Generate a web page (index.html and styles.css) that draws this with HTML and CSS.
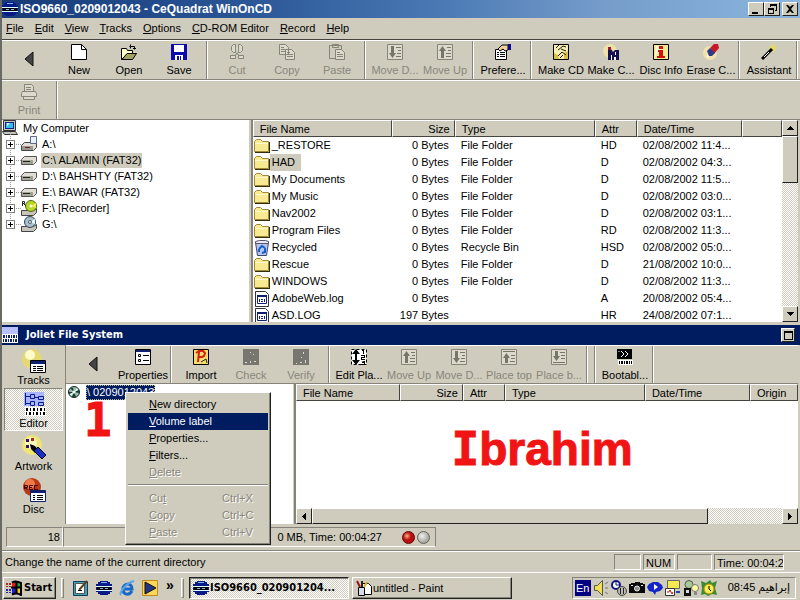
FILE: index.html
```html
<!DOCTYPE html>
<html lang="en">
<head>
<meta charset="utf-8">
<title>ISO9660_0209012043 - CeQuadrat WinOnCD</title>
<link rel="stylesheet" href="styles.css">
</head>
<body>
<svg class="defs" aria-hidden="true">
  <symbol id="globe" viewBox="0 0 16 16"><path fill="#061a88" d="M4 1h8v1h2v2h2v8h-2v2h-2v1H4v-1H2v-2H0V4h2V2h2z"/><path fill="#dff" d="M0 6h16v1H0zM0 10h16v1H0z"/><path fill="#000" d="M1 7h14v3H1z"/><path fill="#79b8e8" d="M4 8h3v1H4zM9 8h3v1H9zM5 2h6v1H5z"/></symbol>
  <symbol id="back" viewBox="0 0 16 16"><path fill="#444" stroke="#111" d="M12 1v14L4 8z"/></symbol>
  <symbol id="new" viewBox="0 0 16 16"><path fill="#fff" stroke="#000" d="M.5.5h10l5 5v10H.5z"/><path fill="none" stroke="#000" d="M10.500.5v5h5"/></symbol>
  <symbol id="open" viewBox="0 0 16 16"><path fill="#ffffd0" stroke="#000" d="M.5 15.500v-11h5l1 2h5v4h-6z"/><path fill="#a5a360" stroke="#000" d="M1 15.500l5-6h9.500l-4 6z"/><path fill="none" stroke="#000" d="M8.500 2.500h5v3M12 4.500h3M9.500.5v4"/></symbol>
  <symbol id="save" viewBox="0 0 16 16"><path fill="#0a0ab0" d="M0 0h16v16H0z"/><path fill="#fff" d="M3 1h10v7H3zM4 11h8v5H4z"/><path fill="#0a0ab0" d="M6 12h2v4H6zM9 12h1v4H9z"/></symbol>
  <symbol id="cut" viewBox="0 0 16 16"><path fill="#dddacd" stroke="#858579" d="M6.500.5v8M9.500.5v8M6.500.5h-2l-2 2v4l2 2h2l4 3M9.500.5h2l2 2v4l-2 2h-2l-4 3M1.500 11.500h5v3h-5zM9.500 11.500h5v3h-5z"/></symbol>
  <symbol id="copy" viewBox="0 0 16 16"><path fill="#dddacd" stroke="#858579" d="M.5.5h6l3 3v7h-9zM6.500 5.500h6l3 3v7h-9z"/><path stroke="#858579" d="M2 3.500h3M2 5.500h4M2 7.500h4M8 8.500h3M8 10.500h6M8 12.500h6"/></symbol>
  <symbol id="paste" viewBox="0 0 16 16"><path fill="#cfccbd" stroke="#858579" d="M.5 1.500h12v13H.5zM3.500.5h6v3h-6z"/><path fill="#dddacd" stroke="#858579" d="M6.500 5.500h6l3 3v7h-9z"/><path stroke="#858579" d="M8 8.500h3M8 10.500h6M8 12.500h6"/></symbol>
  <symbol id="down" viewBox="0 0 16 16"><path fill="#dddacd" stroke="#858579" d="M.5.5h15v15H.5z"/><path fill="#77766b" d="M4 2h3v7h2l-3.500 5L2 9h2zM9 3h5v1H9zM11 6h3v1h-3zM10 9h4v1h-4zM9 12h5v1H9z"/></symbol>
  <symbol id="up" viewBox="0 0 16 16"><path fill="#dddacd" stroke="#858579" d="M.5.5h15v15H.5z"/><path fill="#77766b" d="M4 14h3V7h2L5.500 2 2 7h2zM10 3h4v1h-4zM11 6h3v1h-3zM9 9h5v1H9zM9 12h5v1H9z"/></symbol>
  <symbol id="top" viewBox="0 0 16 16"><path fill="#dddacd" stroke="#858579" d="M.5.5h15v15H.5z"/><path fill="#77766b" d="M2 2h12v1H2zM4 14h3V9h2L5.500 4 2 9h2zM10 6h4v1h-4zM10 9h4v1h-4zM9 12h5v1H9z"/></symbol>
  <symbol id="bottom" viewBox="0 0 16 16"><path fill="#dddacd" stroke="#858579" d="M.5.5h15v15H.5z"/><path fill="#77766b" d="M2 13h12v1H2zM4 2h3v5h2l-3.500 5L2 7h2zM9 3h5v1H9zM10 6h4v1h-4zM10 9h4v1h-4z"/></symbol>
  <symbol id="prefs" viewBox="0 0 16 16"><path fill="#fff" stroke="#000" d="M.5 5.500h11v10H.5z"/><path stroke="#000" d="M2 8.500h2M5 8.500h5M2 10.500h2M5 10.500h5M2 12.500h2M5 12.500h5"/><path fill="#efd09a" stroke="#000" d="M3 5l4-4h6v5l-3 1-2-2-3 2z"/><path fill="#0a0a90" d="M13 0h3v6h-3z"/></symbol>
  <symbol id="makecd" viewBox="0 0 16 16"><path fill="#f5efb0" stroke="#000" d="M.5.5h15v15H.5z"/><path fill="#d8c04a" d="M1 9l4 2 1 4H1zM11 9l4-2v8h-4z"/><path fill="none" stroke="#20180a" d="M3 4l3-3M5 6l5-4 3 1M8 5l5 2M5 12l4-4 4 3M10 11l-3 3"/></symbol>
  <symbol id="makeimg" viewBox="0 0 16 16"><circle cx="7" cy="7" r="7" fill="#eee2a8"/><path fill="#15104f" d="M5 4l3 1 2 3 2-2h4v10H5z"/><path fill="#fff" d="M8 11h1v5H8zM12 8h1v3h-1zM11 13h2v3h-2z"/><path fill="#a01830" d="M5 3h3v3H5z"/></symbol>
  <symbol id="info" viewBox="0 0 16 16"><path fill="#f6ea92" stroke="#000" d="M.5.5h15v15H.5z"/><path fill="#fff8d8" d="M3 1l5 4-6 8z"/><path fill="#d01212" d="M6 2h4v3H6zM5 6h5v6h2v2H4v-2h2V8H5z"/></symbol>
  <symbol id="erase" viewBox="0 0 16 16"><circle cx="7" cy="9" r="7" fill="#f0e4ac"/><path fill="#c81828" d="M7 4l4-4h4l1 4-5 6z"/><path fill="#303a88" d="M4 7l3-3 5 5-3 3H6z"/><path fill="#fff" d="M4 10l2 3-2 1z"/></symbol>
  <symbol id="wand" viewBox="0 0 16 16"><path stroke="#e8e040" d="M12 0v8M8 4h8M9 1l6 6M15 1L9 7"/><path stroke="#000" stroke-width="3" d="M1 15L11 5"/><path stroke="#fff" d="M3 13l5-5"/></symbol>
  <symbol id="print" viewBox="0 0 16 16"><path fill="#dddacd" stroke="#858579" d="M3.500 7.500v-7h7l2 2v5zM1.500 7.500h13l1 2v3H.5v-3zM2.500 12.500h11v3h-11z"/><path stroke="#858579" d="M5 3.500h5M5 5.500h5"/></symbol>
  <symbol id="pc" viewBox="0 0 16 16"><path fill="#c9c7bb" stroke="#333" d="M1.500.5h12v10h-12zM.5 11.500h13l2 3h-13z"/><path fill="#10208a" d="M3 2h9v7H3z"/><path fill="#35bfe8" d="M4 3h7v5H4z"/><path fill="#fff" d="M5 3h3L5 6z"/></symbol>
  <symbol id="drive" viewBox="0 0 16 16"><path fill="#e0ded6" stroke="#555" d="M3.500 4.500h12v5l-3 3H.5v-5z"/><path fill="#a5a39a" d="M1 8h11v4H1z"/><path fill="#222" d="M2 9h7v1H2z"/><path fill="#3b3" d="M10 10h1v1h-1z"/></symbol>
  <symbol id="floppy" viewBox="0 0 16 16"><path fill="#e0ded6" stroke="#444" d="M3.500 6.500h12v5l-3 3H.5v-5z"/><path fill="#9a9890" d="M1 10h11v4H1z"/><path fill="#722" d="M4 11h5v1H4z"/><path fill="#e4f2ff" stroke="#668" d="M9.500.5h6v7h-6z"/></symbol>
  <symbol id="recorder" viewBox="0 0 16 16"><path fill="#c8c6bc" stroke="#444" d="M.5 10.500h12l3-2v4l-3 3H.5z"/><circle cx="10" cy="6" r="5.500" fill="#b4d828" stroke="#576814"/><path fill="#f4ef4c" d="M10 6l5-3v5z"/><circle cx="10" cy="6" r="1.500" fill="#fff"/><path fill="none" stroke="#222" d="M1.500 6V1.500h2v2H2M3 4l2 2"/></symbol>
  <symbol id="cdrom" viewBox="0 0 16 16"><path fill="#c8c6bc" stroke="#444" d="M.5 10.500h12l3-2v4l-3 3H.5z"/><circle cx="9" cy="6" r="5.500" fill="#a9bfcc" stroke="#345"/><path fill="#e8faff" d="M9 6l5-3v5z"/><circle cx="9" cy="6" r="1.500" fill="#fff" stroke="#456"/></symbol>
  <symbol id="folder" viewBox="0 0 16 16"><path fill="#f8ea92" stroke="#a08a3a" d="M.5 13.500v-10l2-2h4l2 2h6v10z"/><path fill="#fffacb" d="M1 5h13v1H1z"/><path fill="#30300c" d="M15 4h1v10h-1zM1 14h15v1H1z"/></symbol>
  <symbol id="bin" viewBox="0 0 16 16"><path fill="#b9c4ea" stroke="#3c447c" d="M1.500 2.500h13l-2 13h-9z"/><path fill="#e8e8fa" stroke="#556" d="M1.500 1.500l4-1h6l3 1v2h-13z"/><path fill="none" stroke="#1260c8" stroke-width="2" d="M5 9l3-3 3 2M11 8v4l-3 1M5 9v3"/></symbol>
  <symbol id="log" viewBox="0 0 16 16"><path fill="#fff" stroke="#333" d="M1.500.5h10l3 3v12h-13z"/><path fill="#fff" stroke="#102070" d="M3.500 4.500h9v8h-9z"/><path fill="#102070" d="M3 4h10v2H3zM5 8h1v3H5zM7 8h2v1H7zM7 10h2v1H7zM10 8h1v3h-1z"/></symbol>
  <symbol id="joliet" viewBox="0 0 16 16"><path fill="#b8c0ff" d="M0 0h16v7H0z"/><path fill="#fff" d="M0 7h16v9H0z"/><path fill="#102070" d="M1 8h2v3H1zM4 8h1v3H4zM6 8h2v3H6zM9 8h1v3H9zM11 8h2v3h-2zM14 8h1v3h-1zM1 12h1v3H1zM3 12h2v3H3zM6 12h1v3H6zM8 12h2v3H8zM11 12h1v3h-1zM13 12h2v3h-2z"/></symbol>
  <symbol id="props" viewBox="0 0 16 16"><path fill="#fff" stroke="#000" d="M.5.5h15v15H.5z"/><path fill="#102070" d="M1 1h14v2H1z"/><path fill="none" stroke="#000" d="M3.500 5.500h2v2h-2zM3.500 10.500h2v2h-2zM8 6.500h6M8 11.500h6"/></symbol>
  <symbol id="import" viewBox="0 0 16 16"><path fill="#f4dc70" stroke="#000" d="M.5.5h15v15H.5z"/><path fill="none" stroke="#d82010" stroke-width="2" d="M5 13l1-10M3 4l3-2h4l2 2-1 3-2 1H6"/><path fill="none" stroke="#222" d="M8 13l5-3 1 4"/></symbol>
  <symbol id="check" viewBox="0 0 16 16"><path fill="#77766f" d="M0 0h16v16H0z"/><path fill="#dddacd" d="M7 3h1v1H7zM10 5h1v1h-1zM2 13h2v1H2zM7 12h1v2H7zM11 12h2v1h-2z"/></symbol>
  <symbol id="verify" viewBox="0 0 16 16"><path fill="#77766f" d="M0 0h16v16H0z"/><path fill="#dddacd" d="M10 3h1v2h-1zM8 8h1v1H8zM12 11h1v3h-1zM7 13h2v1H7zM3 14h1v1H3z"/></symbol>
  <symbol id="edit" viewBox="0 0 16 16"><path fill="#fff" stroke="#000" stroke-dasharray="3 2" d="M.5.5h15v15H.5z"/><path fill="#000" d="M5 0l4 5H6v6h3l-4 5-4-5h3V5H1zM11 1h2v4h-1V2h-1zM10 6h4v3h-3v1h3v1h-4V8h3V7h-3zM10 12h4v4h-4v-1h3v-1h-2v-1h2z"/></symbol>
  <symbol id="boot" viewBox="0 0 16 16"><path fill="#000" d="M0 0h15v10H0z"/><path fill="none" stroke="#fff" d="M4 2l3 3-3 3M8 2l3 3-3 3M2 2v1"/><path fill="#fff" d="M1 11h15v5H1z"/><path fill="#000" d="M2 12h1v3H2zM4 12h2v3H4zM7 12h1v3H7zM9 12h2v3H9zM12 12h1v3h-1zM14 12h1v3h-1z"/></symbol>
  <symbol id="tracks" viewBox="0 0 24 24"><circle cx="10" cy="10" r="10" fill="#e6d874"/><circle cx="8" cy="6" r="5" fill="#fffcca"/><path fill="#fff" stroke="#000" d="M8.500 11.500h15v12h-15z"/><path fill="#102070" d="M9 12h14v3H9z"/><path stroke="#000" d="M11 17.500h3M15 17.500h6M11 19.500h3M15 19.500h6M11 21.500h3M15 21.500h6"/></symbol>
  <symbol id="editor" viewBox="0 0 24 24"><path fill="#aab4ff" d="M2 0h20v14H2z"/><path fill="none" stroke="#071a90" d="M3.500 1v12M4 4.500h4M4 11.500h4M8.500 2.500h4v4h-4zM8.500 9.500h4v4h-4zM13 5.500h4M16.500 4.500h5v3h-5zM16.500 10.500h5v3h-5z"/><path fill="#fff" d="M3 15h21v9H3z"/><path fill="#000" d="M4 16h2v3H4zM8 16h1v3H8zM11 16h2v3h-2zM15 16h1v3h-1zM18 16h2v3h-2zM22 16h1v3h-1zM4 20h1v3H4zM7 20h2v3H7zM11 20h1v3h-1zM14 20h2v3h-2zM18 20h1v3h-1zM21 20h2v3h-2z"/></symbol>
  <symbol id="artwork" viewBox="0 0 24 24"><circle cx="10" cy="10" r="10" fill="#f0e474"/><circle cx="9" cy="8" r="6" fill="#fff9bc"/><path fill="#301070" d="M4 4h3v3H4zM4 10h3v3H4z"/><path fill="#c02020" d="M9 3h3v3H9z"/><path fill="#000" d="M8 9l5 2 3 4-3 3-4-4z"/><path fill="#1830c8" stroke="#000" d="M12 16l4-4 8 8-4 4z"/></symbol>
  <symbol id="disc" viewBox="0 0 24 24"><circle cx="10" cy="9" r="9" fill="#b83a18"/><circle cx="8" cy="6" r="5" fill="#ef7a48"/><path fill="none" stroke="#400" d="M2.500 11V7.500h3v2h-3l3 2M11 7.500H7.500v4H11M7.500 9.500H10M16 7.500h-3.500v4H16"/><path fill="#fff" stroke="#102070" d="M8.500 12.500h15v11h-15z"/><path fill="#102070" d="M9 13h14v2H9z"/><path stroke="#000" d="M11 17.500h2M15 17.500h6M11 19.500h2M15 19.500h6M11 21.500h2M15 21.500h6"/></symbol>
  <symbol id="cd" viewBox="0 0 12 12"><circle cx="6" cy="6" r="5.500" fill="#9ba" stroke="#122"/><path fill="#163a34" d="M6 6L2 2h3zM6 6l5-2v3zM6 6l2 5H4zM6 6L1 8V6z"/><path fill="#e8fff4" d="M6 6l3-4 1 2zM6 6l-3 4-1-2z"/><circle cx="6" cy="6" r="1.500" fill="#fff"/></symbol>
  <symbol id="windows" viewBox="0 0 17 16"><path fill="#d22" d="M6 3l4-1v5H6z"/><path fill="#2a2" d="M11 2l4 1v5l-4-1z"/><path fill="#22b" d="M6 8h4v5l-4 1z"/><path fill="#ec2" d="M11 8l4 1v5l-4-1z"/><path fill="none" stroke="#000" stroke-width="2" d="M6 2.500c3-2 6-1 9 .5v12c-3-2-6-2-9-.5M10.500 1v13M5 7.500h10"/><path fill="#b22" d="M0 3h2v2H0zM3 3h2v2H3zM0 6h2v1H0zM3 6h2v1H3z"/><path fill="#22b" d="M0 9h2v2H0zM3 9h2v2H3zM0 12h2v1H0zM3 12h2v1H3z"/></symbol>
  <symbol id="desktop" viewBox="0 0 16 16"><path fill="#45a0b4" stroke="#163a58" d="M.5 1.500h14v14H.5z"/><path fill="#fff" stroke="#555" d="M2.500 3.500h9v10h-9z"/><path fill="none" stroke="#604018" stroke-width="2" d="M6 10l8-9"/><path stroke="#000" d="M5 10.500h4"/></symbol>
  <symbol id="ie" viewBox="0 0 16 16"><path fill="none" stroke="#1768c8" stroke-width="3" d="M13 11c-3 5-9 4-9-2s9-7 9 0H5"/><path fill="none" stroke="#58a4e8" stroke-width="2" d="M2 15C0 13 7 3 15 1"/></symbol>
  <symbol id="media" viewBox="0 0 16 16"><path fill="#f8d858" stroke="#c88818" d="M.5.5h15v15H.5z"/><path fill="#263484" stroke="#111" d="M3 2l11 6-11 6z"/></symbol>
  <symbol id="paint" viewBox="0 0 16 16"><path fill="#fff" stroke="#000" d="M6.500 3.500h6l3 3v8h-9z"/><path fill="#d8dbe8" stroke="#000" d="M2.500 7.500h6v8h-6z"/><path stroke="#a01010" stroke-width="2" d="M4 7L1 1"/><path stroke="#222" stroke-width="2" d="M6 7V1"/><path stroke="#d8b020" stroke-width="2" d="M8 7l3-5"/></symbol>
  <symbol id="sound" viewBox="0 0 16 16"><path fill="#f2e050" stroke="#555" d="M1.500 5.500h3l5-5v15l-5-5h-3z"/><path stroke="#777" d="M12 4l3-2M12 8h3M12 12l3 2"/></symbol>
  <symbol id="sched" viewBox="0 0 16 16"><circle cx="5" cy="5" r="4" fill="#fff" stroke="#101880" stroke-width="2"/><path fill="none" stroke="#101880" d="M5 2v3h3"/><circle cx="11" cy="11" r="4.500" fill="#bbb9b0" stroke="#444"/><path stroke="#222" d="M9.500 8v6M12.500 8v6"/></symbol>
  <symbol id="camera" viewBox="0 0 16 16"><path fill="#0a0a0a" d="M2 3h4V2h5v1h3v1h2v9H0V4h2z"/><circle cx="8" cy="8.500" r="2.500" fill="#888" stroke="#eee"/><path fill="#ddd" d="M2 5h2v1H2zM12 5h2v1h-2z"/></symbol>
  <symbol id="eye" viewBox="0 0 16 16"><path fill="#1424c8" d="M0 7l2-3 4-2h5l4 3 1 3-3 3-4 1-1 3-2-3-4-1z"/><path fill="#fff" d="M7 4l4 3-4 3z"/></symbol>
  <symbol id="netmon" viewBox="0 0 16 16"><path fill="#f6e850" stroke="#666" d="M2.500.5h12v8h-12z"/><path fill="#fff" stroke="#333" d="M.5 8.500h9v7h-9z"/><path fill="none" stroke="#c01818" d="M2 12h2l1-2 2 4 1-2"/><path fill="#24a" d="M11 11h4v2h-4z"/></symbol>
  <symbol id="power" viewBox="0 0 16 16"><circle cx="6" cy="4.500" r="4" fill="#a8c898" stroke="#476044"/><path fill="#111" d="M1 8h7v8H1z"/><path fill="#ddd" d="M3 10h3v3H3z"/><circle cx="12" cy="8" r="3.500" fill="#ffffa0" stroke="#777"/><path fill="#888" d="M11 12h3v3h-3z"/></symbol>
  <symbol id="alarm" viewBox="0 0 16 16"><path fill="#3a8c34" d="M0 1l5 2 4-3 2 3 5-2-2 7 2 7-5-1-4 2-3-2-4 1 1-7z"/><circle cx="8" cy="9" r="5" fill="#f4ef58" stroke="#b80"/><path fill="none" stroke="#000" d="M8 6v3l2 2"/></symbol>
  <symbol id="a-up" viewBox="0 0 7 4"><path d="M3 0h1v1h1v1h1v1h1v1H0V3h1V2h1V1h1z"/></symbol>
  <symbol id="a-down" viewBox="0 0 7 4"><path d="M0 0h7v1H6v1H5v1H4v1H3V3H2V2H1V1H0z"/></symbol>
  <symbol id="a-left" viewBox="0 0 4 7"><path d="M0 3h1V2h1V1h1V0h1v7H3V6H2V5H1V4H0z"/></symbol>
  <symbol id="a-right" viewBox="0 0 4 7"><path d="M4 3H3V2H2V1H1V0H0v7h1V6h1V5h1V4h1z"/></symbol>
</svg>

<div class="screen">
  <header class="titlebar">
    <svg class="i16"><use href="#globe"/></svg>
    <h1 class="title">ISO9660_0209012043 - CeQuadrat WinOnCD</h1>
    <div class="winbtns">
      <button class="winbtn" aria-label="Minimize"><svg viewBox="0 0 12 10"><path d="M2 8h6v2H2z"/></svg></button>
      <button class="winbtn" aria-label="Restore"><svg viewBox="0 0 12 10"><path d="M4 0h7v7H9V6h1V2H5v1H4zM2 4h6v6H2zM3 6v3h4V6z" fill-rule="evenodd"/></svg></button>
      <button class="winbtn close" aria-label="Close"><svg viewBox="0 0 12 10"><path d="M2 1h2l2 2 2-2h2L7 5l3 4H8L6 7 4 9H2l3-4z"/></svg></button>
    </div>
  </header>

  <nav class="menubar">
    <button><u>F</u>ile</button><button><u>E</u>dit</button><button><u>V</u>iew</button><button><u>T</u>racks</button><button><u>O</u>ptions</button><button><u>C</u>D-ROM Editor</button><button><u>R</u>ecord</button><button><u>H</u>elp</button>
  </nav>

  <div class="toolbar main">
    <button class="tool solo" aria-label="Back"><svg class="i16"><use href="#back"/></svg></button>
    <button class="tool"><svg class="i16"><use href="#new"/></svg>New</button>
    <button class="tool"><svg class="i16"><use href="#open"/></svg>Open</button>
    <button class="tool"><svg class="i16"><use href="#save"/></svg>Save</button>
    <i class="sep"></i>
    <button class="tool" disabled><svg class="i16"><use href="#cut"/></svg>Cut</button>
    <button class="tool" disabled><svg class="i16"><use href="#copy"/></svg>Copy</button>
    <button class="tool" disabled><svg class="i16"><use href="#paste"/></svg>Paste</button>
    <i class="sep"></i>
    <button class="tool" disabled><svg class="i16"><use href="#down"/></svg>Move D...</button>
    <button class="tool" disabled><svg class="i16"><use href="#up"/></svg>Move Up</button>
    <i class="sep"></i>
    <button class="tool"><svg class="i16"><use href="#prefs"/></svg>Prefere...</button>
    <i class="sep"></i>
    <button class="tool"><svg class="i16"><use href="#makecd"/></svg>Make CD</button>
    <button class="tool"><svg class="i16"><use href="#makeimg"/></svg>Make C...</button>
    <button class="tool"><svg class="i16"><use href="#info"/></svg>Disc Info</button>
    <button class="tool"><svg class="i16"><use href="#erase"/></svg>Erase C...</button>
    <i class="sep"></i>
    <button class="tool"><svg class="i16"><use href="#wand"/></svg>Assistant</button>
    <i class="sep"></i>
  </div>
  <div class="toolbar main">
    <button class="tool" disabled><svg class="i16"><use href="#print"/></svg>Print</button>
    <i class="sep"></i>
  </div>

  <main class="explorer">
    <ul class="tree">
      <li class="root"><svg class="i16"><use href="#pc"/></svg><span>My Computer</span></li>
      <li><i class="plus"></i><svg class="i16"><use href="#floppy"/></svg><span>A:\</span></li>
      <li><i class="plus"></i><svg class="i16"><use href="#drive"/></svg><span class="grayed">C:\ ALAMIN (FAT32)</span></li>
      <li><i class="plus"></i><svg class="i16"><use href="#drive"/></svg><span>D:\ BAHSHTY (FAT32)</span></li>
      <li><i class="plus"></i><svg class="i16"><use href="#drive"/></svg><span>E:\ BAWAR (FAT32)</span></li>
      <li><i class="plus"></i><svg class="i16"><use href="#recorder"/></svg><span>F:\ [Recorder]</span></li>
      <li><i class="plus"></i><svg class="i16"><use href="#cdrom"/></svg><span>G:\</span></li>
    </ul>
    <div class="listpane">
      <div class="tablewrap">
        <table>
          <colgroup><col class="w139"><col class="w63"><col class="w140"><col class="w42"><col class="w105"><col></colgroup>
          <thead><tr><th>File Name</th><th class="num">Size</th><th>Type</th><th>Attr</th><th>Date/Time</th><th></th></tr></thead>
          <tbody>
            <tr><td class="name"><svg class="i16"><use href="#folder"/></svg><span>_RESTORE</span></td><td class="num">0 Bytes</td><td>File Folder</td><td>HD</td><td>02/08/2002 11:4...</td><td></td></tr>
            <tr><td class="name"><svg class="i16"><use href="#folder"/></svg><span class="grayed">HAD</span></td><td class="num">0 Bytes</td><td>File Folder</td><td>D</td><td>02/08/2002 04:3...</td><td></td></tr>
            <tr><td class="name"><svg class="i16"><use href="#folder"/></svg><span>My Documents</span></td><td class="num">0 Bytes</td><td>File Folder</td><td>D</td><td>02/08/2002 11:5...</td><td></td></tr>
            <tr><td class="name"><svg class="i16"><use href="#folder"/></svg><span>My Music</span></td><td class="num">0 Bytes</td><td>File Folder</td><td>D</td><td>02/08/2002 03:0...</td><td></td></tr>
            <tr><td class="name"><svg class="i16"><use href="#folder"/></svg><span>Nav2002</span></td><td class="num">0 Bytes</td><td>File Folder</td><td>D</td><td>02/08/2002 03:1...</td><td></td></tr>
            <tr><td class="name"><svg class="i16"><use href="#folder"/></svg><span>Program Files</span></td><td class="num">0 Bytes</td><td>File Folder</td><td>RD</td><td>02/08/2002 11:3...</td><td></td></tr>
            <tr><td class="name"><svg class="i16"><use href="#bin"/></svg><span>Recycled</span></td><td class="num">0 Bytes</td><td>Recycle Bin</td><td>HSD</td><td>02/08/2002 05:0...</td><td></td></tr>
            <tr><td class="name"><svg class="i16"><use href="#folder"/></svg><span>Rescue</span></td><td class="num">0 Bytes</td><td>File Folder</td><td>D</td><td>21/08/2002 10:0...</td><td></td></tr>
            <tr><td class="name"><svg class="i16"><use href="#folder"/></svg><span>WINDOWS</span></td><td class="num">0 Bytes</td><td>File Folder</td><td>D</td><td>02/08/2002 11:3...</td><td></td></tr>
            <tr><td class="name"><svg class="i16"><use href="#log"/></svg><span>AdobeWeb.log</span></td><td class="num">0 Bytes</td><td></td><td>A</td><td>20/08/2002 05:4...</td><td></td></tr>
            <tr><td class="name"><svg class="i16"><use href="#log"/></svg><span>ASD.LOG</span></td><td class="num">197 Bytes</td><td></td><td>HR</td><td>24/08/2002 07:1...</td><td></td></tr>
          </tbody>
        </table>
      </div>
      <div class="vscroll">
        <button aria-label="Scroll up"><svg class="ah"><use href="#a-up"/></svg></button>
        <div class="thumb"></div><div class="track"></div>
        <button aria-label="Scroll down"><svg class="ah"><use href="#a-down"/></svg></button>
      </div>
    </div>
  </main>

  <div class="subtitle">
    <svg class="i16"><use href="#joliet"/></svg>
    <h2 class="title">Joliet File System</h2>
    <button class="winbtn max" aria-label="Maximize"><svg viewBox="0 0 9 9"><path fill-rule="evenodd" d="M0 0h9v9H0zM1 2v6h7V2z"/></svg></button>
  </div>

  <section class="project">
    <nav class="side">
      <button><svg class="i24"><use href="#tracks"/></svg>Tracks</button>
      <button class="on"><svg class="i24"><use href="#editor"/></svg>Editor</button>
      <button><svg class="i24"><use href="#artwork"/></svg>Artwork</button>
      <button><svg class="i24"><use href="#disc"/></svg>Disc</button>
    </nav>
    <div class="work">
      <div class="toolbar">
        <button class="tool solo" aria-label="Back"><svg class="i16"><use href="#back"/></svg></button>
        <button class="tool"><svg class="i16"><use href="#props"/></svg>Properties</button>
        <i class="sep"></i>
        <button class="tool"><svg class="i16"><use href="#import"/></svg>Import</button>
        <button class="tool" disabled><svg class="i16"><use href="#check"/></svg>Check</button>
        <button class="tool" disabled><svg class="i16"><use href="#verify"/></svg>Verify</button>
        <i class="sep"></i>
        <button class="tool"><svg class="i16"><use href="#edit"/></svg>Edit Pla...</button>
        <button class="tool" disabled><svg class="i16"><use href="#up"/></svg>Move Up</button>
        <button class="tool" disabled><svg class="i16"><use href="#down"/></svg>Move D...</button>
        <button class="tool" disabled><svg class="i16"><use href="#top"/></svg>Place top</button>
        <button class="tool" disabled><svg class="i16"><use href="#bottom"/></svg>Place b...</button>
        <i class="sep"></i><i class="sep"></i>
        <button class="tool"><svg class="i16"><use href="#boot"/></svg>Bootabl...</button>
        <i class="sep"></i>
      </div>
      <div class="panes">
        <div class="ptree">
          <div class="volume"><svg class="i12"><use href="#cd"/></svg><span class="picked">\ 0209012043</span></div>
          <div class="note one">1</div>
          <div class="popup" role="menu">
            <button><span><u>N</u>ew directory</span></button>
            <button class="hot"><span><u>V</u>olume label</span></button>
            <button><span><u>P</u>roperties...</span></button>
            <button><span><u>F</u>ilters...</span></button>
            <button disabled><span><u>D</u>elete</span></button>
            <hr>
            <button disabled><span>Cu<u>t</u></span><span class="key">Ctrl+X</span></button>
            <button disabled><span><u>C</u>opy</span><span class="key">Ctrl+C</span></button>
            <button disabled><span><u>P</u>aste</span><span class="key">Ctrl+V</span></button>
          </div>
        </div>
        <div class="plist">
          <table>
            <colgroup><col class="w104"><col class="w63"><col class="w42"><col class="w140"><col class="w105"><col></colgroup>
            <thead><tr><th>File Name</th><th class="num">Size</th><th>Attr</th><th>Type</th><th>Date/Time</th><th>Origin</th></tr></thead>
          </table>
          <div class="note author"><span class="cap">I</span>brahim</div>
          <div class="hscroll">
            <button aria-label="Scroll left"><svg class="av"><use href="#a-left"/></svg></button>
            <div class="thumb"></div><div class="track"></div>
            <button aria-label="Scroll right"><svg class="av"><use href="#a-right"/></svg></button>
          </div>
        </div>
      </div>
    </div>
  </section>

  <div class="summary">
    <div class="count">18</div>
    <div class="total"><span>0 MB, Time: 00:04:27</span><i class="lamp red"></i><i class="lamp"></i></div>
  </div>

  <footer class="status">
    <div class="msg">Change the name of the current directory</div>
    <div class="cell c1"></div><div class="cell c2">NUM</div><div class="cell c3"></div><div class="cell c4">Time: 00:04:2</div>
  </footer>

  <div class="taskbar">
    <button class="start"><svg class="i17"><use href="#windows"/></svg>Start</button>
    <i class="grip"></i>
    <div class="quick">
      <button aria-label="Show Desktop"><svg class="i16"><use href="#desktop"/></svg></button>
      <button aria-label="WinOnCD"><svg class="i16"><use href="#globe"/></svg></button>
      <button aria-label="Internet Explorer"><svg class="i16"><use href="#ie"/></svg></button>
      <button aria-label="Media Player"><svg class="i16"><use href="#media"/></svg></button>
    </div>
    <span class="more">»</span>
    <i class="grip"></i>
    <button class="task on"><svg class="i16"><use href="#globe"/></svg>ISO9660_020901204...</button>
    <button class="task"><svg class="i16"><use href="#paint"/></svg>untitled - Paint</button>
    <div class="tray">
      <span class="lang">En</span>
      <svg class="i16"><use href="#sound"/></svg><svg class="i16"><use href="#sched"/></svg><svg class="i16"><use href="#camera"/></svg><svg class="i16"><use href="#eye"/></svg><svg class="i16"><use href="#netmon"/></svg><svg class="i16"><use href="#power"/></svg><svg class="i16"><use href="#alarm"/></svg>
      <span class="clock">08:45 <bdi lang="ar">إبراهيم</bdi></span>
    </div>
  </div>
</div>
</body>
</html>
```

FILE: styles.css
```css
:root {
  --face: #cfccbd;
  --shade: #85837a;
  --dark: #45443f;
  --navy: #001c60;
  --dither: repeating-conic-gradient(#fff 0 25%, #cfccbd 0 50%) 0 0 / 2px 2px;
  --ui: "Liberation Sans", Arial, sans-serif;
  --bold: "DejaVu Sans Condensed", "DejaVu Sans", sans-serif;
}
* { box-sizing: border-box; }
body { margin: 0; font: 11px/16px var(--ui); color: #000; }
button { margin: 0; padding: 0; border: 0; background: none; font: inherit; color: inherit; }
ul { list-style: none; margin: 0; padding: 0; }
svg { display: block; flex: none; }
u { text-underline-offset: 1px; }
.defs { display: none; }
.i12 { width: 12px; height: 12px; }
.i16 { width: 16px; height: 16px; }
.i17 { width: 17px; height: 16px; }
.i24 { width: 24px; height: 24px; }
.ah { width: 7px; height: 4px; }
.av { width: 4px; height: 7px; }

.screen { display: flex; flex-direction: column; height: 100vh; overflow: hidden; background: var(--face); border-left: 2px solid #6a6a64; }

/* title bars */
.titlebar { display: flex; align-items: center; height: 18px; flex: none; padding-right: 2px; background: linear-gradient(90deg, #173b78, #2a5596 30%, #4a79b4 55%, #759cca 75%, #8ab6de); }
.title { margin: 0 auto 0 2px; font: bold 12px/18px var(--ui); color: #fff; white-space: nowrap; }
.winbtns { display: flex; }
.winbtn { display: flex; align-items: center; justify-content: center; width: 16px; height: 14px; background: var(--face); border: 1px solid; border-color: #fff #222 #222 #fff; }
.winbtn svg { width: 12px; height: 10px; }
.close { margin-left: 2px; }
.subtitle { display: flex; align-items: center; height: 20px; flex: none; margin-top: 3px; padding-right: 5px; background: var(--navy); }
.subtitle .title { margin-left: 8px; font: bold 11px/18px var(--bold); }
.winbtn.max { width: 14px; }
.max svg { width: 9px; height: 9px; }

.menubar { display: flex; align-items: flex-start; gap: 11px; height: 22px; flex: none; padding: 2px 4px 0; }

/* toolbars */
.toolbar { display: flex; height: 39px; flex: none; padding-left: 2px; border-top: 1px solid #fff; border-bottom: 1px solid var(--shade); }
.toolbar.main { height: 40px; }
.menubar + .toolbar { box-shadow: 0 -1px var(--dark); }
.tool { display: flex; flex-direction: column; align-items: center; width: 50px; flex: none; padding-top: 3px; white-space: nowrap; }
.tool .i16 { margin-bottom: 2px; }
.tool:disabled { color: #88867b; }
.tool.solo { justify-content: center; padding: 0; }
.sep { width: 8px; flex: none; background: linear-gradient(90deg, transparent 2px, var(--shade) 2px 3px, #fff 3px 4px, transparent 4px); }

/* drives and files */
.explorer { display: flex; flex: 203 1 0; min-height: 0; margin-right: 2px; }
.tree { width: 31%; flex: none; background: #fff; overflow: hidden; }
.tree li { display: flex; align-items: center; height: 16px; padding-left: 4px; }
.tree .root { padding: 0; }
.tree span { padding: 0 1px; margin-left: 4px; line-height: 15px; white-space: nowrap; }
.plus { position: relative; width: 9px; height: 9px; margin-right: 6px; flex: none; border: 1px solid #808080; background: linear-gradient(#000, #000) 1px 3px / 5px 1px no-repeat, linear-gradient(#000, #000) 3px 1px / 1px 5px no-repeat; }
.plus::before { content: ""; position: absolute; left: 3px; top: -9px; height: 7px; border-left: 1px dotted #999; }
.plus::after { content: ""; position: absolute; left: 9px; top: 3px; width: 5px; border-top: 1px dotted #999; }
.grayed { background: var(--face); }
.listpane { display: flex; flex: 1; min-width: 0; margin-left: 2px; border-left: 2px solid var(--shade); background: #fff; overflow: hidden; }
.tablewrap { flex: 1; min-width: 0; overflow: hidden; }
table { width: 100%; table-layout: fixed; border-collapse: separate; border-spacing: 0; }
.w42 { width: 42px; }
.w63 { width: 63px; }
.w104 { width: 104px; }
.w105 { width: 105px; }
.w139 { width: 139px; }
.w140 { width: 140px; }
th { height: 17px; padding: 0 6px; font-weight: normal; text-align: left; line-height: 14px; white-space: nowrap; background: var(--face); border: 1px solid; border-color: #fff var(--dark) var(--dark) #fff; }
th.num, td.num { text-align: right; }
th.num { padding-right: 4px; }
td { height: 17px; padding: 0 6px; line-height: 17px; white-space: nowrap; }
.name { display: flex; align-items: center; padding: 0 1px; }
.name span { padding: 0 6px 0 2px; }

/* scroll bars */
.vscroll { display: flex; flex-direction: column; width: 16px; flex: none; }
.hscroll { display: flex; height: 16px; flex: none; margin-top: auto; }
.vscroll button, .hscroll button { display: flex; align-items: center; justify-content: center; width: 16px; height: 16px; flex: none; }
.vscroll button, .hscroll button, .thumb { background: var(--face); border: 1px solid; border-color: #fff #222 #222 #fff; }
.track { flex: 3 1 0; background: var(--dither); }
.vscroll .thumb { height: 47px; }
.hscroll .thumb { flex: 16 1 0; }

/* project */
.project { display: flex; flex: 179 1 0; min-height: 0; margin-right: 2px; }
.side { width: 63px; flex: none; padding: 0 2px; }
.side button { display: flex; flex-direction: column; align-items: center; width: 100%; height: 43px; padding-top: 3px; border: 1px solid transparent; line-height: 14px; }
.side .on { background: var(--dither); border-color: var(--shade) #fff #fff var(--shade); }
.work { display: flex; flex-direction: column; flex: 1; min-width: 0; border-left: 1px solid var(--shade); }
.panes { display: flex; flex: 1; min-height: 0; }
.ptree { position: relative; width: 31%; flex: none; background: #fff; }
.volume { display: flex; align-items: center; gap: 6px; height: 16px; padding-left: 2px; }
.picked { padding: 0 1px; line-height: 15px; color: #fff; background: var(--navy); outline: 1px dotted #b8b48c; outline-offset: -1px; }
.plist { position: relative; display: flex; flex-direction: column; flex: 1; min-width: 0; margin-left: 1px; border-left: 2px solid var(--shade); background: #fff; }
.note { position: absolute; color: #f01414; font: bold 46px/46px "Comic Sans MS", "Liberation Sans", sans-serif; -webkit-text-stroke: 1px #f01414; }
.one, .cap { font-family: "Comic Sans MS", "DejaVu Sans Mono", monospace; }
.one { left: 18px; top: 13px; }
.author { left: 31%; top: 42px; }

.popup { position: absolute; z-index: 2; left: 59px; top: 8px; width: 146px; padding: 3px 2px; background: var(--face); border: 1px solid; border-color: #fff #222 #222 #fff; box-shadow: inset -1px -1px var(--shade); }
.popup button { display: flex; width: 100%; height: 17px; padding: 0 16px 0 21px; line-height: 17px; }
.popup .hot { color: #fff; background: var(--navy); }
.popup button:disabled { color: #88867b; text-shadow: 1px 1px #fff; }
.popup .key { width: 30px; margin-left: auto; text-align: left; }
.popup hr { height: 2px; margin: 3px 0 4px; border: 0; border-top: 1px solid var(--shade); border-bottom: 1px solid #fff; }

/* bottom bars */
.summary { display: flex; height: 27px; flex: none; padding: 3px 0 3px 4px; border-bottom: 1px solid var(--shade); }
.count { width: 57px; padding-right: 2px; text-align: right; line-height: 19px; border: 1px solid; border-color: var(--shade) #fff #fff var(--shade); }
.total { display: flex; align-items: center; justify-content: flex-end; width: 373px; padding-right: 5px; border: 1px solid; border-color: var(--shade) var(--shade) #fff var(--shade); }
.total span { margin-right: 18px; }
.lamp { width: 13px; height: 13px; margin-left: 2px; border: 1px solid #66645c; border-radius: 50%; background: radial-gradient(circle at 4px 4px, #eee, #a5a49c 70%); }
.lamp.red { border-color: #600; background: radial-gradient(circle at 4px 4px, #ffb080, #b81010 40%); }
.status { display: flex; gap: 2px; height: 21px; flex: none; padding: 2px 16px 2px 0; border-top: 1px solid #fff; }
.msg { flex: 1; padding-left: 3px; line-height: 17px; }
.cell { padding-left: 2px; border: 1px solid; border-color: var(--shade) #fff #fff var(--shade); overflow: hidden; white-space: nowrap; }
.c1 { width: 27px; }
.c2 { width: 32px; }
.c3 { width: 35px; }
.c4 { width: 70px; }

.taskbar { display: flex; align-items: center; height: 28px; flex: none; padding: 2px 4px 0 1px; border-top: 1px solid #fff; }
.start, .task { display: flex; align-items: center; height: 22px; border: 1px solid; border-color: #fff #222 #222 #fff; box-shadow: inset -1px -1px var(--shade); white-space: nowrap; }
.start { width: 53px; flex: none; gap: 1px; padding-left: 2px; font: bold 11px/16px var(--bold); }
.grip { width: 3px; height: 20px; flex: none; margin: 0 5px; border: 1px solid; border-color: #fff var(--shade) var(--shade) #fff; }
.quick { display: flex; gap: 7px; margin-left: 4px; }
.more { width: 18px; padding-left: 8px; font: bold 14px/16px var(--ui); height: 22px; }
.task { flex: 0 1 160px; min-width: 0; gap: 1px; padding-left: 3px; overflow: hidden; }
.task + .task { margin-left: 3px; }
.task.on { font: bold 11px/16px var(--bold); background: var(--dither); border-color: #222 #fff #fff #222; box-shadow: inset 1px 1px var(--shade); }
.tray { display: flex; align-items: center; gap: 2px; height: 22px; flex: none; margin-left: auto; padding: 0 5px 0 2px; border: 1px solid; border-color: var(--shade) #fff #fff var(--shade); }
.lang { width: 16px; color: #fff; background: #000080; text-align: center; }
.clock { margin-left: 9px; white-space: nowrap; }
.clock bdi { font-family: "DejaVu Sans", sans-serif; }
```
